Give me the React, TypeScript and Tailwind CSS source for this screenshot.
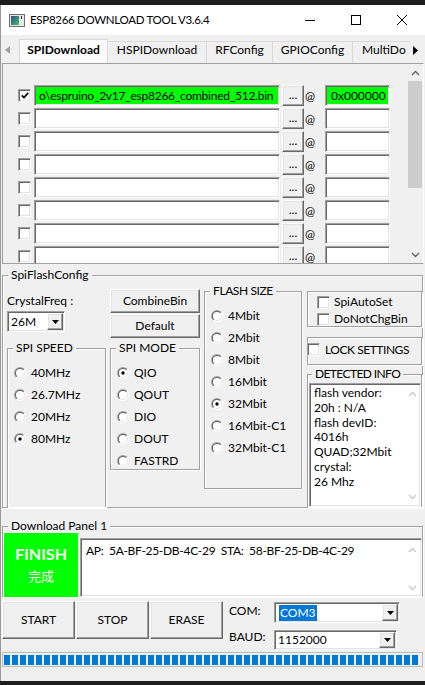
import React from "react";

const sunkenB =
  "border border-t-[#a0a0a0] border-l-[#a0a0a0] border-r-white border-b-white shadow-[inset_1px_1px_0_#696969,inset_-1px_-1px_0_#e3e3e3]";
const raised =
  "bg-[#f0f0f0] border border-t-white border-l-white border-r-[#696969] border-b-[#696969] shadow-[inset_-1px_-1px_0_#a0a0a0,inset_1px_1px_0_#e3e3e3]";
const groupB =
  "border border-[#a0a0a0] shadow-[inset_1px_1px_0_#ffffff,1px_1px_0_#ffffff] min-w-0";

function Check({ checked, className = "" }: { checked?: boolean; className?: string }) {
  return (
    <div className={`w-[13px] h-[13px] shrink-0 bg-white flex items-center justify-center ${sunkenB} ${className}`}>
      {checked && (
        <svg width="8" height="7" viewBox="0 0 8 7">
          <path d="M0.8 3.4 L3 5.6 L7.2 0.9" stroke="#000" strokeWidth="1.7" fill="none" />
        </svg>
      )}
    </div>
  );
}

function Radio({ checked }: { checked?: boolean }) {
  const gid = React.useId().replace(/[^a-zA-Z0-9]/g, "");
  return (
    <svg width="12" height="12" viewBox="0 0 12 12" className="shrink-0">
      <defs>
        <linearGradient id={`o${gid}`} x1="0" y1="0" x2="1" y2="1">
          <stop offset="0.5" stopColor="#a0a0a0" />
          <stop offset="0.5" stopColor="#ffffff" />
        </linearGradient>
        <linearGradient id={`i${gid}`} x1="0" y1="0" x2="1" y2="1">
          <stop offset="0.5" stopColor="#696969" />
          <stop offset="0.5" stopColor="#e3e3e3" />
        </linearGradient>
      </defs>
      <circle cx="6" cy="6" r="6" fill={`url(#o${gid})`} />
      <circle cx="6" cy="6" r="5" fill={`url(#i${gid})`} />
      <circle cx="6" cy="6" r="4" fill="#ffffff" />
      {checked && <circle cx="6" cy="6" r="1.7" fill="#000" />}
    </svg>
  );
}

function Chevron({ up, color = "#606060" }: { up?: boolean; color?: string }) {
  return (
    <svg width="9" height="6" viewBox="0 0 9 6">
      <path
        d={up ? "M1 5 L4.5 1.5 L8 5" : "M1 1 L4.5 4.5 L8 1"}
        stroke={color}
        strokeWidth="1.3"
        fill="none"
      />
    </svg>
  );
}

function DropBtn() {
  return (
    <div className={`${raised} w-[16px] m-[1px] self-stretch shrink-0 flex items-center justify-center`}>
      <svg width="7" height="4" viewBox="0 0 7 4">
        <path d="M0 0 H7 L3.5 4 Z" fill="#000" />
      </svg>
    </div>
  );
}

function AppIcon() {
  return (
    <svg width="16" height="13" viewBox="0 0 16 13">
      <defs>
        <linearGradient id="appicong" x1="0" y1="0" x2="1" y2="1">
          <stop offset="0" stopColor="#27508e" />
          <stop offset="1" stopColor="#4cbf63" />
        </linearGradient>
      </defs>
      <rect x="0.5" y="0.5" width="15" height="12" fill="#e8e8e8" stroke="#6e6e6e" />
      <rect x="2" y="2" width="8" height="9" fill="url(#appicong)" />
      <rect x="12" y="2" width="1" height="3" fill="#333" />
    </svg>
  );
}

function Legend({ children, className = "ml-[5px]" }: { children: React.ReactNode; className?: string }) {
  return (
    <legend className={`${className} px-[3px] leading-[14px] bg-[#f0f0f0] relative`}>{children}</legend>
  );
}

function RadioRow({ label, checked }: { label: string; checked?: boolean }) {
  return (
    <div className="h-[16px] flex items-center pl-[6px]">
      <Radio checked={checked} />
      <span className="ml-[5px] leading-[14px]">{label}</span>
    </div>
  );
}

export default function App() {
  const rows = Array.from({ length: 8 });
  const chunks = Array.from({ length: 52 });
  return (
    <div className="w-[425px] h-[685px] overflow-hidden bg-[#1b1b1b] flex flex-col font-['Lato',sans-serif] text-[12px] leading-[14px] text-black">
      <div className="h-[5px] shrink-0 bg-[#1e1e1e]" />
      <div className="flex-1 min-h-0 flex flex-col bg-[#f0f0f0] border-l border-[#9a9a9a]">
        {/* Title bar */}
        <div className="h-[30px] shrink-0 bg-white flex items-center">
          <div className="ml-[8px] flex">
            <AppIcon />
          </div>
          <span className="ml-[5px] text-[11.5px] tracking-[-0.3px]">ESP8266 DOWNLOAD TOOL V3.6.4</span>
          <div className="ml-auto flex h-full">
            <div className="w-[46px] h-full flex items-center justify-center">
              <svg width="10" height="1" viewBox="0 0 10 1">
                <rect width="10" height="1" fill="#000" />
              </svg>
            </div>
            <div className="w-[46px] h-full flex items-center justify-center">
              <svg width="10" height="10" viewBox="0 0 10 10">
                <rect x="0.5" y="0.5" width="9" height="9" fill="none" stroke="#000" />
              </svg>
            </div>
            <div className="w-[46px] h-full flex items-center justify-center">
              <svg width="10" height="10" viewBox="0 0 10 10">
                <path d="M0 0 L10 10 M10 0 L0 10" stroke="#000" strokeWidth="1" />
              </svg>
            </div>
          </div>
        </div>

        {/* Tabs */}
        <div className="h-[28px] shrink-0 flex items-end">
          <div className="w-[18px] h-full shrink-0 flex items-center pl-[4px] pt-[2px]">
            <svg width="5" height="8" viewBox="0 0 5 8">
              <path d="M5 0 V8 L0 4 Z" fill="#a0a0a0" />
            </svg>
          </div>
          <div className="w-[391px] h-full shrink-0 overflow-hidden flex items-end whitespace-nowrap">
            <div className="w-[89px] h-[24px] shrink-0 bg-[#fbfbfb] border border-b-0 border-[#d9d9d9] pt-[3px] text-center font-bold">
              SPIDownload
            </div>
            <div className="w-[99px] h-[22px] shrink-0 border-t border-r border-[#d9d9d9] pt-[1px] text-center">
              HSPIDownload
            </div>
            <div className="w-[66px] h-[22px] shrink-0 border-t border-r border-[#d9d9d9] pt-[1px] text-center">
              RFConfig
            </div>
            <div className="w-[80px] h-[22px] shrink-0 border-t border-r border-[#d9d9d9] pt-[1px] text-center">
              GPIOConfig
            </div>
            <div className="w-[57px] h-[22px] shrink-0 overflow-hidden border-t border-[#d9d9d9] pt-[1px] pl-[9px]">
              MultiDo
            </div>
          </div>
          <div className="w-[15px] h-full shrink-0 flex items-center pl-[3px] pt-[2px]">
            <svg width="5" height="9" viewBox="0 0 5 9">
              <path d="M0 0 V9 L5 4.5 Z" fill="#000" />
            </svg>
          </div>
        </div>

        {/* File list */}
        <div className="ml-[1px] w-[422px] h-[201px] shrink-0 border border-[#a0a0a0] border-r-white flex overflow-hidden">
          <div className="flex-1 min-w-0 pl-[15px] pt-[21px] flex flex-col gap-[2px] overflow-hidden">
            {rows.map((_, i) => (
              <div key={i} className="flex items-center h-[21px] shrink-0">
                <Check checked={i === 0} />
                <div
                  className={`ml-[3px] w-[246px] h-full shrink-0 ${sunkenB} ${
                    i === 0 ? "bg-[#00ff00]" : "bg-white"
                  } flex items-center pl-[4px] overflow-hidden whitespace-nowrap tracking-[-0.25px]`}
                >
                  {i === 0 ? "o\\espruino_2v17_esp8266_combined_512.bin" : ""}
                </div>
                <div className={`ml-[2px] w-[22px] h-full shrink-0 ${raised} flex items-end justify-center pb-[3px]`}>
                  ...
                </div>
                <span className="w-[21px] shrink-0 pl-[1px]">@</span>
                <div
                  className={`w-[65px] h-full shrink-0 ${sunkenB} ${
                    i === 0 ? "bg-[#00ff00]" : "bg-white"
                  } flex items-center pl-[5px]`}
                >
                  {i === 0 ? "0x000000" : ""}
                </div>
              </div>
            ))}
          </div>
          <div className="w-[16px] shrink-0 flex flex-col bg-[#f0f0f0]">
            <div className="h-[17px] shrink-0 flex items-center justify-center">
              <Chevron up />
            </div>
            <div className="h-[107px] shrink-0 mx-[1px] bg-[#cdcdcd]" />
            <div className="flex-1" />
            <div className="h-[17px] shrink-0 flex items-center justify-center">
              <Chevron />
            </div>
          </div>
        </div>

        {/* SpiFlashConfig */}
        <fieldset className={`ml-[1px] mt-[4px] w-[421px] shrink-0 ${groupB}`}>
          <Legend>SpiFlashConfig</Legend>
          <div className="h-[225px] flex pl-[4px]">
            {/* col1 */}
            <div className="w-[99px] h-[225px] shrink-0 flex flex-col">
              <div className="mt-[12px] h-[14px]">CrystalFreq :</div>
              <div className={`mt-[3px] w-[58px] h-[21px] shrink-0 bg-white ${sunkenB} flex items-center`}>
                <span className="flex-1 pl-[3px]">26M</span>
                <DropBtn />
              </div>
              <fieldset className={`mt-[9px] border-b-0 ${groupB}`}>
                <Legend>SPI SPEED</Legend>
                <div className="h-[152px] pt-[10px] flex flex-col gap-[6px]">
                  <RadioRow label="40MHz" />
                  <RadioRow label="26.7MHz" />
                  <RadioRow label="20MHz" />
                  <RadioRow label="80MHz" checked />
                </div>
              </fieldset>
            </div>
            {/* col2 */}
            <div className="ml-[4px] w-[90px] shrink-0 flex flex-col">
              <div className={`mt-[7px] h-[24px] shrink-0 ${raised} flex items-center justify-center`}>CombineBin</div>
              <div className={`mt-[1px] h-[24px] shrink-0 ${raised} flex items-center justify-center`}>Default</div>
              <fieldset className={`mt-[3px] ${groupB}`}>
                <Legend>SPI MODE</Legend>
                <div className="pt-[10px] flex flex-col gap-[6px]">
                  <RadioRow label="QIO" checked />
                  <RadioRow label="QOUT" />
                  <RadioRow label="DIO" />
                  <RadioRow label="DOUT" />
                  <RadioRow label="FASTRD" />
                </div>
              </fieldset>
            </div>
            {/* col3 */}
            <div className="ml-[4px] w-[98px] shrink-0 flex flex-col">
              <fieldset className={`mt-[2px] ${groupB}`}>
                <Legend>
                  <span className="tracking-[-0.4px]">FLASH SIZE</span>
                </Legend>
                <div className="h-[190px] pt-[10px] flex flex-col gap-[6px]">
                  <RadioRow label="4Mbit" />
                  <RadioRow label="2Mbit" />
                  <RadioRow label="8Mbit" />
                  <RadioRow label="16Mbit" />
                  <RadioRow label="32Mbit" checked />
                  <RadioRow label="16Mbit-C1" />
                  <RadioRow label="32Mbit-C1" />
                </div>
              </fieldset>
            </div>
            {/* col4 */}
            <div className="ml-[5px] w-[115px] shrink-0 flex flex-col">
              <div className={`mt-[9px] h-[36px] shrink-0 ${groupB} pl-[9px] pt-[3px] flex flex-col gap-[3px]`}>
                <div className="h-[14px] flex items-center">
                  <Check />
                  <span className="ml-[4px]">SpiAutoSet</span>
                </div>
                <div className="h-[14px] flex items-center">
                  <Check />
                  <span className="ml-[4px]">DoNotChgBin</span>
                </div>
              </div>
              <div className={`mt-[10px] h-[28px] shrink-0 ${groupB} flex items-center pb-[3px]`}>
                <Check className="-ml-[1px]" />
                <span className="ml-[5px] tracking-[-0.45px]">LOCK SETTINGS</span>
              </div>
              <fieldset className={`mt-[2px] border-b-0 ${groupB}`}>
                <Legend className="ml-[4px]">
                  <span className="tracking-[-0.6px]">DETECTED INFO</span>
                </Legend>
                <div className={`ml-[1px] mt-[2px] h-[124px] bg-white ${sunkenB} flex`}>
                  <div className="flex-1 pl-[4px] pt-[2px] leading-[14.8px] whitespace-nowrap">
                    <div>flash vendor:</div>
                    <div>20h : N/A</div>
                    <div>flash devID:</div>
                    <div>4016h</div>
                    <div>QUAD;32Mbit</div>
                    <div>crystal:</div>
                    <div>26 Mhz</div>
                  </div>
                  <div className="w-[16px] shrink-0 flex flex-col justify-between items-center pt-[7px] pb-[6px]">
                    <Chevron up color="#c8c8c8" />
                    <Chevron color="#c8c8c8" />
                  </div>
                </div>
              </fieldset>
            </div>
          </div>
        </fieldset>

        {/* Download Panel 1 */}
        <fieldset className={`ml-[1px] mt-[11px] w-[421px] shrink-0 border-b-0 ${groupB}`}>
          <Legend>Download Panel 1</Legend>
          <div className="flex h-[64px]">
            <div className="ml-[1px] w-[74px] h-[64px] shrink-0 bg-[#00ff00] flex flex-col items-center text-white">
              <div className="mt-[12px] text-[16px] leading-[18px] font-bold">FINISH</div>
              <div className="mt-[5px] text-[13px] leading-[16px] font-['Noto_Sans_CJK_SC',sans-serif]">完成</div>
            </div>
            <div className={`ml-[2px] mt-[5px] flex-1 h-[59px] bg-white ${sunkenB} flex`}>
              <div className="flex-1 pl-[5px] pt-[4px] leading-[15px] whitespace-pre tracking-[-0.3px]">
                {"AP:  5A-BF-25-DB-4C-29  STA:  58-BF-25-DB-4C-29"}
              </div>
              <div className="w-[17px] shrink-0 flex flex-col justify-between items-center pt-[8px] pb-[5px]">
                <Chevron up color="#c8c8c8" />
                <Chevron color="#c8c8c8" />
              </div>
            </div>
          </div>
        </fieldset>

        {/* Bottom controls */}
        <div className="mt-[4px] h-[49px] shrink-0 flex items-start">
          <div className="ml-[1px] flex gap-[1px]">
            <div className={`w-[73px] h-[38px] ${raised} flex items-center justify-center`}>START</div>
            <div className={`w-[73px] h-[38px] ${raised} flex items-center justify-center`}>STOP</div>
            <div className={`w-[73px] h-[38px] ${raised} flex items-center justify-center`}>ERASE</div>
          </div>
          <div className="ml-[6px] mt-[1px] flex flex-col">
            <div className="flex items-start h-[21px]">
              <span className="w-[45px] pt-[2px]">COM:</span>
              <div className={`w-[126px] h-[21px] bg-white ${sunkenB} flex items-center`}>
                <div className="flex-1 pl-[4px]">
                  <span className="bg-[#0078d7] text-white px-[1px] leading-[16px] inline-block">COM3</span>
                </div>
                <DropBtn />
              </div>
            </div>
            <div className="mt-[7px] flex items-start h-[20px]">
              <span className="w-[45px]">BAUD:</span>
              <div className={`w-[123px] h-[20px] bg-white ${sunkenB} flex items-center`}>
                <span className="flex-1 pl-[3px]">1152000</span>
                <DropBtn />
              </div>
            </div>
          </div>
        </div>

        {/* Progress */}
        <div className="ml-[1px] mt-[2px] w-[421px] h-[15px] shrink-0 border border-[#bcbcbc] pl-[1px] pt-[2px] flex gap-[2px] overflow-hidden">
          {chunks.map((_, i) => (
            <div key={i} className="w-[6px] h-[10px] shrink-0 bg-[#0078d7]" />
          ))}
        </div>
        <div className="flex-1" />
      </div>
      <div className="h-[4px] shrink-0 bg-[#1e1e1e]" />
    </div>
  );
}
